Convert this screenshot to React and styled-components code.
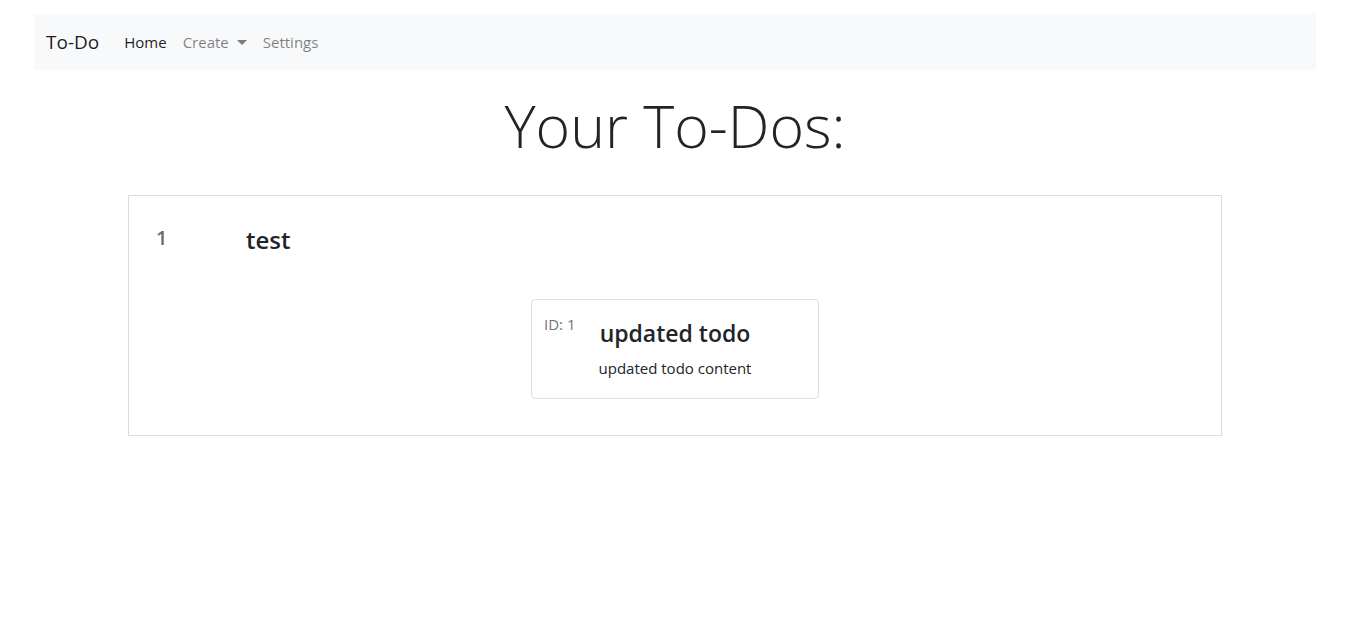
import styled, { createGlobalStyle } from "styled-components";

const GlobalStyle = createGlobalStyle`
  body {
    margin: 0;
    font-family: "Open Sans", "Noto Sans", sans-serif;
    color: #212529;
    background: #fff;
  }
`;

const Page = styled.div`
  padding: 14px 34px;
`;

const Navbar = styled.nav`
  display: flex;
  align-items: center;
  height: 56px;
  padding: 0 12px;
  background-color: #f8f9fa;
`;

const Brand = styled.a`
  font-size: 19px;
  color: rgba(0, 0, 0, 0.9);
  margin-right: 17px;
`;

const NavLink = styled.a`
  font-size: 15px;
  padding: 0 8px;
  color: ${(p) => (p.active ? "rgba(0,0,0,0.9)" : "rgba(0,0,0,0.5)")};
  display: flex;
  align-items: center;
  &:first-of-type {
    padding-left: 0;
  }
`;

const Caret = styled.span`
  display: inline-block;
  margin-left: 8px;
  border-top: 5px solid;
  border-left: 5px solid transparent;
  border-right: 5px solid transparent;
`;

const Title = styled.h1`
  margin: 20px 0 34px;
  text-align: center;
  font-size: 59px;
  font-weight: 300;
  line-height: 1.2;
  color: #212529;
`;

const Board = styled.div`
  width: 1094px;
  margin: 0 auto;
  border: 1px solid #dcdcdc;
  box-sizing: border-box;
  padding: 30px 27px 36px;
`;

const Row = styled.div`
  display: flex;
  align-items: flex-start;
`;

const Index = styled.span`
  width: 90px;
  font-size: 20px;
  font-weight: 600;
  color: #6c705f;
  line-height: 1.2;
`;

const Name = styled.h3`
  margin: 0;
  font-size: 24px;
  font-weight: 600;
  line-height: 1.2;
  color: #212529;
`;

const Card = styled.div`
  position: relative;
  width: 288px;
  margin: 44px auto 0;
  box-sizing: border-box;
  border: 1px solid rgba(0, 0, 0, 0.125);
  border-radius: 4px;
  padding: 20px 12px 20px;
  text-align: center;
`;

const CardId = styled.span`
  position: absolute;
  left: 12px;
  top: 14px;
  font-size: 15px;
  color: #6c757d;
`;

const CardTitle = styled.h4`
  margin: 0 0 11px;
  font-size: 23px;
  font-weight: 600;
  line-height: 1.2;
`;

const CardText = styled.p`
  margin: 0;
  font-size: 15px;
`;

const App = () => {
  return (
    <>
      <GlobalStyle />
      <Page>
        <Navbar>
          <Brand>To-Do</Brand>
          <NavLink active>Home</NavLink>
          <NavLink>
            Create <Caret />
          </NavLink>
          <NavLink>Settings</NavLink>
        </Navbar>
        <Title>Your To-Dos:</Title>
        <Board>
          <Row>
            <Index>1</Index>
            <Name>test</Name>
          </Row>
          <Card>
            <CardId>ID: 1</CardId>
            <CardTitle>updated todo</CardTitle>
            <CardText>updated todo content</CardText>
          </Card>
        </Board>
      </Page>
    </>
  );
};

export default App;
